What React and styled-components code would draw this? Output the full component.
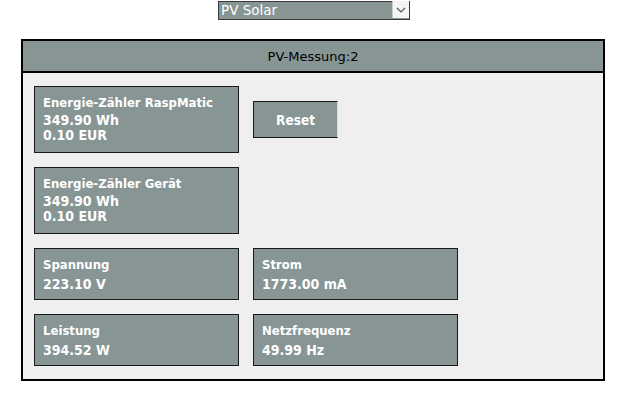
import React from "react";
import styled, { createGlobalStyle } from "styled-components";

const GlobalStyle = createGlobalStyle`
  body {
    margin: 0;
    background: #ffffff;
    font-family: "DejaVu Sans Condensed", "DejaVu Sans", Verdana, sans-serif;
  }
`;

const Page = styled.div`
  width: 626px;
  display: flex;
  flex-direction: column;
  align-items: center;
`;

const SelectWrap = styled.div`
  position: relative;
  width: 192px;
  height: 19px;
  margin-left: 2px;
`;

const Select = styled.select`
  appearance: none;
  width: 100%;
  height: 100%;
  margin: 0;
  padding: 0 0 0 2px;
  border: 1px solid #3a3a3a;
  background: #879595;
  color: #ffffff;
  font-family: "DejaVu Sans", sans-serif;
  font-size: 13.5px;
  outline: none;
`;

const Arrow = styled.div`
  position: absolute;
  top: 1px;
  right: 1px;
  width: 16px;
  height: 17px;
  background: #f4f4f4;
  border-left: 1px solid #c8c8c8;
  display: flex;
  align-items: center;
  justify-content: center;
  pointer-events: none;
`;

const Panel = styled.div`
  margin-top: 20px;
  width: 580px;
  border: 2px solid #000000;
  background: #efefef;
`;

const Header = styled.div`
  height: 30px;
  background: #879595;
  border-bottom: 2px solid #000000;
  display: flex;
  align-items: center;
  justify-content: center;
  font-family: "DejaVu Sans", sans-serif;
  font-size: 13px;
  color: #000000;
`;

const Grid = styled.div`
  display: grid;
  grid-template-columns: 205px 205px;
  gap: 14px;
  padding: 13px 11px;
  align-items: center;
`;

const Tile = styled.div`
  box-sizing: border-box;
  height: ${(p) => p.h}px;
  background: #879595;
  border: 1px solid #1a1a1a;
  padding: 8px 8px 0 8px;
  color: #ffffff;
  font-weight: bold;
  font-size: 13px;
`;

const Title = styled.div`
  line-height: 16px;
  margin-bottom: ${(p) => (p.$tight ? "2px" : "4px")};
`;

const Value = styled.div`
  font-size: 14px;
  line-height: 15px;
`;

const ResetButton = styled.button`
  justify-self: start;
  width: 85px;
  height: 37px;
  background: #879595;
  color: #ffffff;
  border: 1px solid #1a1a1a;
  border-right: 1px solid #dcdcdc;
  font-family: inherit;
  font-weight: bold;
  font-size: 13.5px;
  padding: 0;
`;

const Card = ({ title, values, h }) => (
  <Tile h={h}>
    <Title $tight={values.length > 1}>{title}</Title>
    {values.map((v) => (
      <Value key={v}>{v}</Value>
    ))}
  </Tile>
);

export default function App() {
  return (
    <Page>
      <GlobalStyle />
      <SelectWrap>
        <Select defaultValue="pv">
          <option value="pv">PV Solar</option>
        </Select>
        <Arrow>
          <svg width="10" height="6" viewBox="0 0 10 6">
            <path d="M1 1 L5 5 L9 1" fill="none" stroke="#555" strokeWidth="1.2" />
          </svg>
        </Arrow>
      </SelectWrap>
      <Panel>
        <Header>PV-Messung:2</Header>
        <Grid>
          <Card h={67} title="Energie-Zähler RaspMatic" values={["349.90 Wh", "0.10 EUR"]} />
          <ResetButton>Reset</ResetButton>
          <Card h={67} title="Energie-Zähler Gerät" values={["349.90 Wh", "0.10 EUR"]} />
          <div />
          <Card h={52} title="Spannung" values={["223.10 V"]} />
          <Card h={52} title="Strom" values={["1773.00 mA"]} />
          <Card h={52} title="Leistung" values={["394.52 W"]} />
          <Card h={52} title="Netzfrequenz" values={["49.99 Hz"]} />
        </Grid>
      </Panel>
    </Page>
  );
}
